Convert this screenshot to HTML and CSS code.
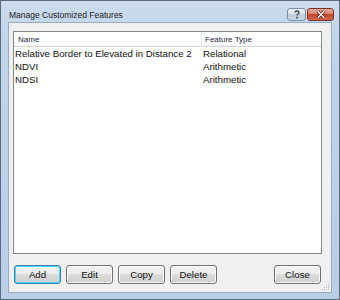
FILE: index.html
```html
<!DOCTYPE html>
<html>
<head>
<meta charset="utf-8">
<link rel="stylesheet" href="styles.css">
</head>
<body>
<div class="window">
  <div class="titlebar">
    <span class="title">Manage Customized Features</span>
    <div class="caption-btns">
      <div class="cbtn help"><svg width="10" height="9" viewBox="0 0 10 10"><path d="M2.8 2.8 C2.8 0.6 7.2 0.6 7.2 2.8 C7.2 4.3 5.1 4.2 5.1 6.2" fill="none" stroke="#3a4250" stroke-width="1.5"/><rect x="4.2" y="7.5" width="1.8" height="1.8" fill="#3a4250"/></svg></div>
      <div class="cbtn close"><svg width="12" height="9" viewBox="0 0 12 10"><path d="M2.5 1.5 L9.5 8.5 M9.5 1.5 L2.5 8.5" stroke="#5a1a10" stroke-width="3.2"/><path d="M2.5 1.5 L9.5 8.5 M9.5 1.5 L2.5 8.5" stroke="#ffffff" stroke-width="1.6"/></svg></div>
    </div>
  </div>
  <div class="client">
    <div class="list">
      <div class="header">
        <div class="col name">Name</div>
        <div class="col type">Feature Type</div>
      </div>
      <div class="row"><div class="col name">Relative Border to Elevated in Distance 2</div><div class="col type">Relational</div></div>
      <div class="row"><div class="col name">NDVI</div><div class="col type">Arithmetic</div></div>
      <div class="row"><div class="col name">NDSI</div><div class="col type">Arithmetic</div></div>
    </div>
    <div class="buttons">
      <button class="btn default">Add</button>
      <button class="btn">Edit</button>
      <button class="btn">Copy</button>
      <button class="btn">Delete</button>
      <span class="spacer"></span>
      <button class="btn">Close</button>
    </div>
    <svg class="grip" width="10" height="10" viewBox="0 0 10 10">
      <g fill="#b8b8b8">
        <rect x="8" y="2" width="1" height="1"/>
        <rect x="6" y="4" width="1" height="1"/><rect x="8" y="4" width="1" height="1"/>
        <rect x="4" y="6" width="1" height="1"/><rect x="6" y="6" width="1" height="1"/><rect x="8" y="6" width="1" height="1"/>
        <rect x="2" y="8" width="1" height="1"/><rect x="4" y="8" width="1" height="1"/><rect x="6" y="8" width="1" height="1"/><rect x="8" y="8" width="1" height="1"/>
      </g>
    </svg>
  </div>
</div>
</body>
</html>
```

FILE: styles.css
```css
* { box-sizing: border-box; }
html, body { margin: 0; padding: 0; }
body {
  width: 340px;
  height: 300px;
  font-family: "Liberation Sans", Arial, sans-serif;
  font-size: 9.7px;
  color: #111;
}
.window {
  width: 340px;
  height: 300px;
  border: 1px solid #5d6b7c;
  background: linear-gradient(#cddcee 0, #c0d4ea 40px, #b9cfe8 100%);
  padding: 0 7px 6px 7px;
  display: flex;
  flex-direction: column;
}
.titlebar {
  height: 21px;
  display: flex;
  align-items: flex-start;
  justify-content: space-between;
}
.title {
  padding-left: 1px;
  margin-top: 9px;
  font-size: 8.5px;
  color: #1a1a1a;
}
.caption-btns {
  display: flex;
  margin-right: -2px;
  margin-top: 7px;
}
.cbtn {
  height: 13px;
  border-radius: 3px;
  display: flex;
  align-items: center;
  justify-content: center;
}
.help {
  width: 19px;
  margin-right: 1px;
  border: 1px solid #7f8ea1;
  background: linear-gradient(#eef2f8 0, #d7e0ec 50%, #c2cfdf 50%, #cad6e5 100%);
}
.close {
  width: 27px;
  border: 1px solid #7a3326;
  background: linear-gradient(#e7a99a 0, #d7816b 50%, #c4452c 50%, #d06a4d 100%);
}
.client {
  flex: 1;
  position: relative;
  background: #f0f0f0;
  border: 1px solid #98abc2;
  display: flex;
  flex-direction: column;
}
.list {
  flex: 1;
  margin: 8px 9px 0 4px;
  background: #fff;
  border: 1px solid #828790;
}
.header {
  height: 15px;
  display: flex;
  align-items: center;
  border-bottom: 1px solid #d5d5d5;
  background: linear-gradient(#ffffff 0, #ffffff 50%, #f7f8f9 100%);
  color: #1e2a3b;
  font-size: 8px;
}
.header .col.name {
  padding-left: 4px;
  border-right: 1px solid #e3e5e8;
  height: 100%;
  display: flex;
  align-items: center;
}
.header .col.type {
  padding-left: 3px;
}
.row {
  height: 13px;
  display: flex;
  align-items: center;
}
.col.name { width: 188px; padding-left: 1px; white-space: nowrap; }
.col.type { padding-left: 1px; white-space: nowrap; }
.buttons {
  display: flex;
  margin: 11px 10px 8px 5px;
  gap: 5px;
}
.spacer { flex: 1; }
.btn {
  width: 47px;
  height: 19px;
  padding: 0;
  font-family: "Liberation Sans", Arial, sans-serif;
  font-size: 9.7px;
  color: #111;
  border: 1px solid #707070;
  border-radius: 3px;
  background: linear-gradient(#f2f2f2 0, #ebebeb 50%, #dddddd 50%, #cfcfcf 100%);
  box-shadow: inset 0 0 0 1px #fcfcfc;
}
.btn.default {
  border-color: #3c7fb1;
  box-shadow: inset 0 0 0 1px #48d7fb;
}
.grip {
  position: absolute;
  right: 1px;
  bottom: 1px;
}
```
